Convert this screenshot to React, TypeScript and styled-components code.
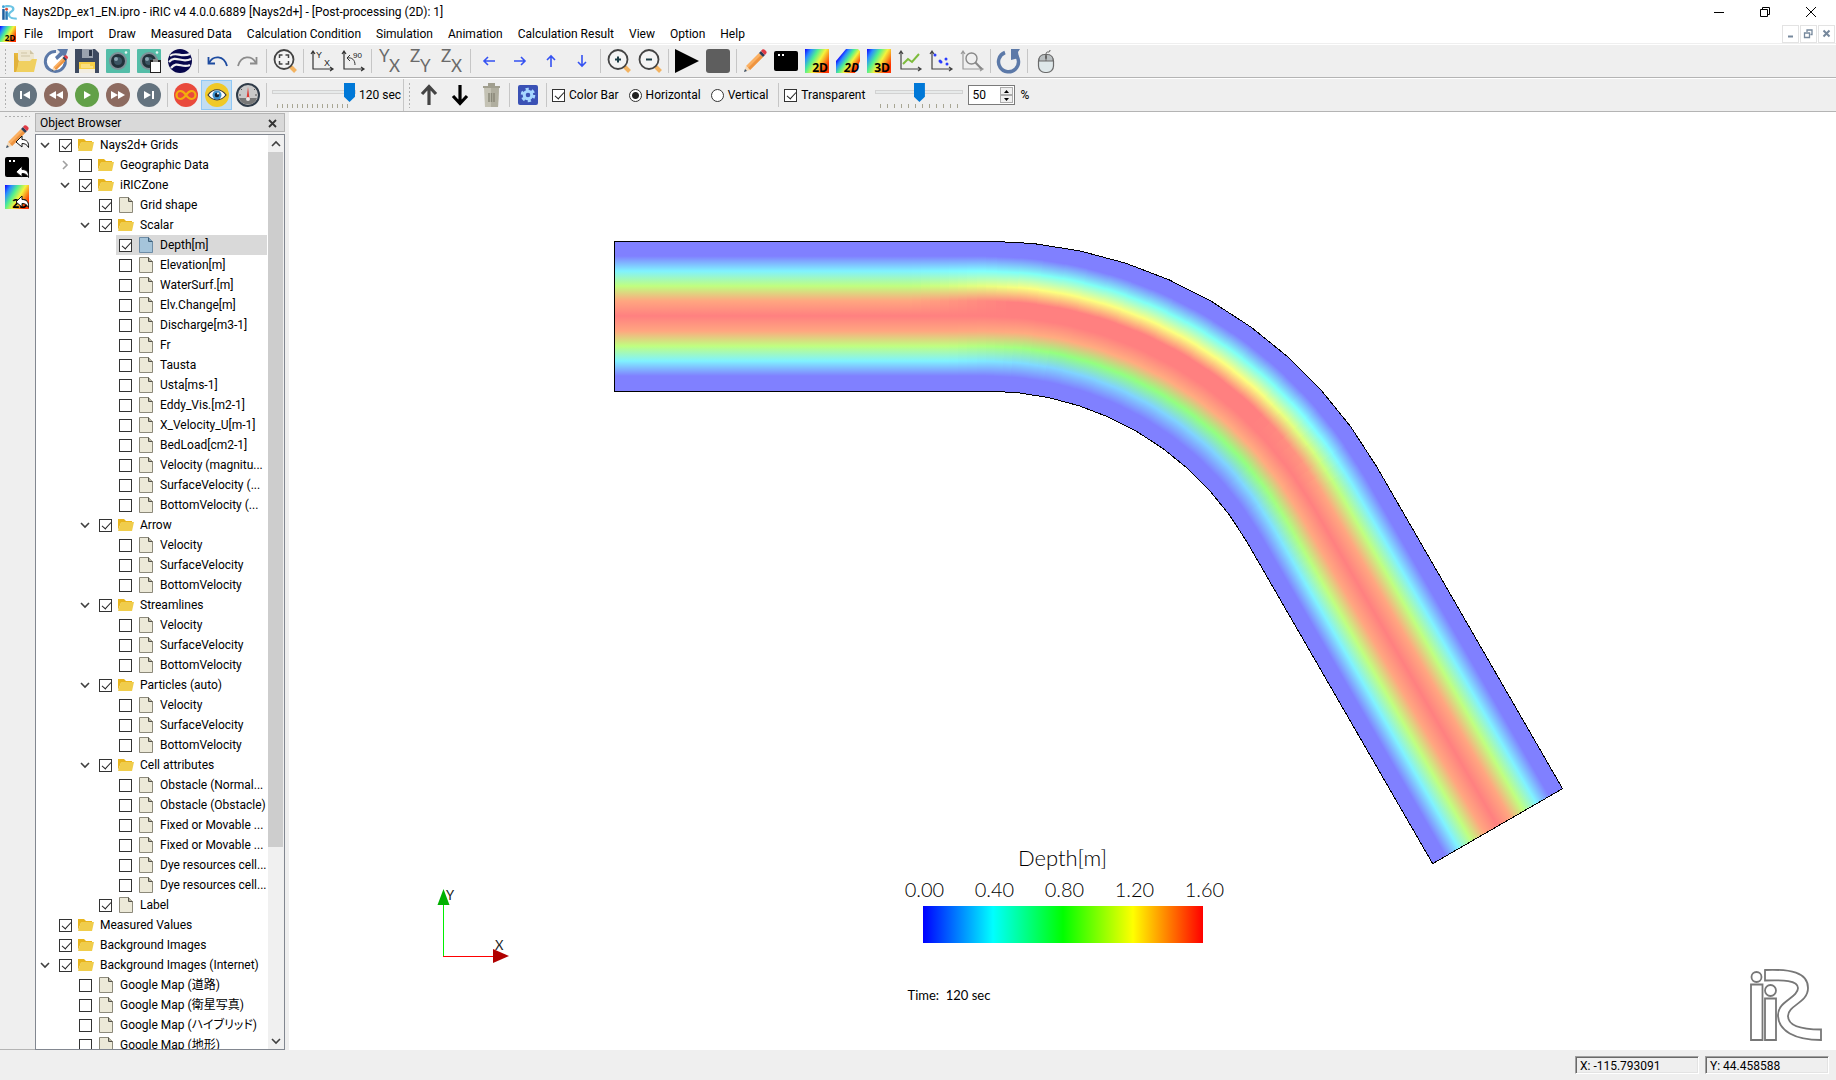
import React, { useState } from "react";
import styled, { createGlobalStyle } from "styled-components";

const UI = `Roboto, "Noto Sans CJK JP", sans-serif`;
const STROKE = `Lato, "Noto Sans CJK JP", sans-serif`;

const Global = createGlobalStyle`
  * { box-sizing: border-box; }
  body { margin: 0; background: #fff; color: #000; font: 12px/16px ${UI}; }
  button { font: inherit; color: inherit; border: 0; background: none; padding: 0; margin: 0; }
  svg { display: block; overflow: visible; }
`;

const Window = styled.div`
  height: 100vh;
  display: flex;
  flex-direction: column;
  overflow: hidden;
`;

/* ---------- title and menu ---------- */

const TitleBar = styled.header`
  height: 24px;
  flex: none;
  display: flex;
  align-items: center;
  padding: 0 2px;
`;
const Title = styled.h1`
  flex: 1;
  margin: 0 0 0 6px;
  font-size: 12px;
  font-weight: 400;
  white-space: nowrap;
`;
const WindowButton = styled.button`
  width: 46px;
  height: 20px;
  display: grid;
  place-items: center;
`;
const MenuBar = styled.nav`
  height: 20px;
  flex: none;
  display: flex;
  align-items: center;
  gap: 1px;
  border-bottom: 1px solid #efefef;
`;
const MenuItem = styled.button`
  height: 19px;
  padding: 0 7px;
  white-space: nowrap;
`;
const MdiButtons = styled.div`
  margin-left: auto;
  display: flex;
  gap: 1px;
  padding-right: 1px;
`;
const MdiButton = styled.button`
  width: 17px;
  height: 18px;
  border: 1px solid #e3e3e3;
  display: grid;
  place-items: center;
`;

/* ---------- tool bars ---------- */

const ToolRow = styled.div`
  height: 34px;
  flex: none;
  display: flex;
  align-items: center;
  background: #efefef;
  border-top: 1px solid #fff;
  border-bottom: 1px solid #b4b4b4;
`;
const Grip = styled.div<{ $across?: boolean }>`
  flex: none;
  width: ${(p) => (p.$across ? "26px" : "3px")};
  height: ${(p) => (p.$across ? "3px" : "26px")};
  margin: ${(p) => (p.$across ? "0 0 4px" : "0 2px 0 4px")};
  background: radial-gradient(circle, #b0b0b0 1px, transparent 1px) 0 0 / ${(p) => (p.$across ? "4px 3px" : "3px 4px")};
`;
const ToolButton = styled.button<{ $active?: boolean }>`
  flex: none;
  width: 31px;
  height: 30px;
  display: grid;
  place-items: center;
  border: 1px solid ${(p) => (p.$active ? "#90c8f6" : "transparent")};
  background: ${(p) => (p.$active ? "#c2ddf2" : "none")};
`;
const Divider = styled.div<{ $full?: boolean }>`
  flex: none;
  width: ${(p) => (p.$full ? "1px" : "6px")};
  height: ${(p) => (p.$full ? "32px" : "24px")};
  background: linear-gradient(#c6c6c6, #c6c6c6) center / 1px 100% no-repeat;
`;
const SliderBox = styled.div<{ $width: number; $step: number }>`
  flex: none;
  width: ${(p) => p.$width}px;
  height: 26px;
  margin-left: 3px;
  padding-bottom: 6px;
  background: repeating-linear-gradient(90deg, #a8a694 0 1px, transparent 1px ${(p) => p.$step}px) 5px 100% / calc(100% - 10px) 4px no-repeat;
`;
const Slider = styled.input`
  appearance: none;
  display: block;
  width: 100%;
  height: 20px;
  margin: 0;
  background: none;
  &::-webkit-slider-runnable-track {
    height: 4px;
    background: #e7eaea;
    border: 1px solid #d2d2d2;
  }
  &::-webkit-slider-thumb {
    appearance: none;
    width: 11px;
    height: 19px;
    margin-top: -8px;
    background: #0078d7;
    clip-path: polygon(0 0, 100% 0, 100% 72%, 50% 100%, 0 72%);
  }
`;
const SliderText = styled.span`
  margin: 0 2px 0 3px;
  white-space: nowrap;
`;
const Option = styled.label`
  display: flex;
  align-items: center;
  gap: 4px;
  margin: 0 7px 0 3px;
  white-space: nowrap;
`;
const Check = styled.input`
  appearance: none;
  flex: none;
  position: relative;
  width: 13px;
  height: 13px;
  margin: 0;
  border: 1px solid #333;
  background: #fff;
  &:checked::after {
    content: "";
    position: absolute;
    left: 4px;
    top: 0;
    width: 4px;
    height: 8px;
    border: solid #222;
    border-width: 0 1px 1px 0;
    transform: rotate(42deg);
  }
`;
const Radio = styled.input`
  appearance: none;
  flex: none;
  width: 13px;
  height: 13px;
  margin: 0;
  border: 1px solid #333;
  border-radius: 50%;
  background: #fff;
  &:checked {
    background: radial-gradient(circle, #222 3px, #fff 4px);
  }
`;
const SpinBox = styled.div`
  display: flex;
  width: 47px;
  height: 20px;
  margin: 0 5px;
  padding: 1px;
  border: 1px solid #7a7a7a;
  background: #fff;
`;
const SpinInput = styled.input`
  appearance: textfield;
  flex: 1;
  min-width: 0;
  border: 0;
  padding: 0 2px;
  font: 12px/16px ${UI};
  &::-webkit-inner-spin-button { appearance: none; }
`;
const SpinButtons = styled.div`
  width: 13px;
  display: grid;
  grid-template-rows: 1fr 1fr;
`;
const SpinButton = styled.button`
  display: grid;
  place-items: center;
  background: #f0f0f0;
  border: 1px solid #adadad;
`;

/* ---------- work area ---------- */

const Work = styled.main`
  flex: 1;
  min-height: 0;
  display: flex;
  background: #efefef;
`;
const SideTools = styled.aside`
  width: 35px;
  flex: none;
  padding: 3px 2px 0 0;
  display: flex;
  flex-direction: column;
  align-items: center;
  border-bottom: 1px solid #b4b4b4;
`;
const SideButton = styled.button`
  width: 31px;
  height: 30px;
  display: grid;
  place-items: center;
`;
const Dock = styled.section`
  width: 250px;
  flex: none;
  margin-right: 4px;
  padding-top: 1px;
  display: flex;
  flex-direction: column;
  gap: 2px;
`;
const DockTitle = styled.div`
  height: 19px;
  flex: none;
  display: flex;
  align-items: center;
  justify-content: space-between;
  padding: 1px 5px 0 4px;
  background: #d9d9d9;
  border: 1px solid #b4b4b4;
`;
const DockName = styled.h2`
  margin: 0;
  font-size: 12px;
  font-weight: 400;
`;
const DockClose = styled.button`
  width: 13px;
  height: 13px;
  display: grid;
  place-items: center;
`;
const TreeFrame = styled.div`
  flex: 1;
  min-height: 0;
  display: flex;
  border: 1px solid #828790;
  background: #fff;
`;
const Tree = styled.ul`
  flex: 1;
  min-width: 0;
  margin: 0;
  padding: 0 1px 0 0;
  list-style: none;
  overflow: hidden;
`;
const Row = styled.li<{ $level: number }>`
  height: 20px;
  display: flex;
  align-items: center;
  padding-left: ${(p) => p.$level * 20}px;
`;
const Expander = styled.button`
  flex: none;
  width: 20px;
  height: 20px;
  padding-right: 2px;
  display: grid;
  place-items: center;
`;
const RowLabel = styled.label<{ $selected?: boolean }>`
  flex: 1;
  min-width: 0;
  height: 20px;
  display: flex;
  align-items: center;
  padding-left: 3px;
  white-space: nowrap;
  font-feature-settings: "palt";
  background: ${(p) => (p.$selected ? "#d9d9d9" : "none")};
`;
const RowIcon = styled.span`
  flex: none;
  width: 16px;
  margin: 0 6px;
`;
const Scroll = styled.div`
  width: 16px;
  flex: none;
  display: flex;
  flex-direction: column;
  background: #f0f0f0;
`;
const ScrollButton = styled.button`
  height: 17px;
  flex: none;
  display: grid;
  place-items: center;
`;
const ScrollTrack = styled.div`
  flex: 1;
  min-height: 0;
`;
const ScrollThumb = styled.div`
  height: 79%;
  margin-right: 1px;
  background: #cdcdcd;
`;

/* ---------- viewer ---------- */

const Viewer = styled.section`
  flex: 1;
  min-width: 0;
  position: relative;
  overflow: hidden;
  background: #fff;
`;
const Scene = styled.svg`
  width: 100%;
  height: 100%;
`;
const AxisLayer = styled.div`
  position: absolute;
  left: 144px;
  bottom: 82px;
`;
const LogoLayer = styled.div`
  position: absolute;
  right: 14px;
  bottom: 9px;
`;
const Legend = styled.div`
  position: absolute;
  left: 50%;
  bottom: 47px;
  width: 310px;
  margin-left: -155px;
  font-family: ${STROKE};
`;
const LegendTitle = styled.div`
  text-align: center;
  font-size: 22px;
  line-height: 24px;
  font-weight: 300;
`;
const LegendScale = styled.div`
  display: flex;
  justify-content: space-between;
  margin: 7px -22px 0 -18px;
  font-size: 20px;
  line-height: 24px;
  font-weight: 300;
  & > span { width: 70px; text-align: center; }
`;
const LegendBar = styled.div`
  height: 37px;
  margin: 5px 15px 0;
  background: linear-gradient(90deg, #00f, #0ff, #0f0, #ff0, #f00);
`;
const TimeText = styled.div`
  margin-top: 44px;
  font-size: 13px;
  line-height: 16px;
  white-space: pre;
`;

/* ---------- status bar ---------- */

const StatusBar = styled.footer`
  height: 30px;
  flex: none;
  display: flex;
  justify-content: flex-end;
  align-items: center;
  gap: 6px;
  padding-right: 7px;
  background: #efefef;
`;
const StatusCell = styled.output`
  width: 124px;
  height: 18px;
  padding-left: 4px;
  line-height: 18px;
  border: 1px solid;
  border-color: #a0a0a0 #fff #fff #a0a0a0;
  box-shadow: inset 1px 1px 0 #696969, inset -1px -1px 0 #e3e3e3;
`;

/* ---------- icons ---------- */

const Svg = ({ size = 24, box = 24, children }: { size?: number; box?: number; children: React.ReactNode }) => (
  <svg width={size} height={size} viewBox={`0 0 ${box} ${box}`} fill="none" aria-hidden="true">
    {children}
  </svg>
);

const AppIcon = () => (
  <Svg size={15} box={72}>
    <circle cx="7" cy="8" r="7" fill="#3aa0d8" />
    <path d="M1 19h12v52H1z" fill="#1f5f9e" />
    <circle cx="22" cy="20" r="7" fill="#e0503c" />
    <path d="M16 30h12v41H16z" fill="#2a7cb8" />
    <path d="M15 1C40-1 60 4 60 19S39 36 39 47s12 13 32 14v10C45 71 28 62 28 46s20-17 20-27-15-8-33-7z" fill="#6cc4e4" />
  </Svg>
);

const OpenIcon = () => (
  <Svg>
    <path d="M1 4h7l2 3v14L1 23z" fill="#e8b93e" />
    <path d="M5 1h12l4 4v14H5z" fill="#ede6d0" />
    <path d="M17 1v4h4z" fill="#cfc5a6" />
    <path d="M8 4h6M8 7h9" stroke="#cfc5a6" />
    <path d="M6 12h11l2-2h5l-3 13H3z" fill="#f0d060" />
    <path d="M1 4v19h2l3-11z" fill="#e2b23a" />
  </Svg>
);

const Pencil = ({ scale = 1, x = 0, y = 0 }: { scale?: number; x?: number; y?: number }) => (
  <g transform={`translate(${x} ${y}) scale(${scale})`}>
    <path d="M3 17L16 4l4 4L7 21z" fill="#fbb062" />
    <path d="M5 19L18 6l2 2L7 21z" fill="#ee9440" />
    <path d="M16 4l2-2 4 4-2 2z" fill="#2f3d56" />
    <path d="M18 2c1-2 3-2 4-1l1 1c1 1 1 2-1 4z" fill="#e03a44" />
    <path d="M3 17l-2 6 6-2z" fill="#f3d9b8" />
    <path d="M1 23l1-3 2 2z" fill="#38506c" />
  </g>
);

const ReloadEditIcon = () => (
  <Svg>
    <circle cx="11" cy="13" r="9" fill="#fff" />
    <path d="M12 2.500A10 10 0 1 0 21 10" stroke="#5c79a8" strokeWidth="3" />
    <path d="M13 0h11l-3 9-2-3-6 5-2-3 5-5z" fill="#5c79a8" />
    <Pencil scale={0.72} x={7} y={6} />
  </Svg>
);
const ReloadIcon = () => (
  <Svg>
    <path d="M8 3.500A10 10 0 1 0 17 4.500" stroke="#5c79a8" strokeWidth="3.500" />
    <path d="M14 0h9l-2 3 1 6-8 2z" fill="#5c79a8" />
  </Svg>
);
const SaveIcon = () => (
  <Svg>
    <path d="M0 0h20l4 4v20H0z" fill="#3e4a60" />
    <path d="M7 0h11v9H7z" fill="#9aa2ae" />
    <path d="M14 1h3v6h-3z" fill="#2c3648" />
    <path d="M4 13h16v9H4z" fill="#f7cf46" />
    <path d="M6 16h9M6 18h12" stroke="#fff0b8" />
    <path d="M4 20h16v4H4z" fill="#f2ede0" />
  </Svg>
);
const CameraIcon = ({ paper }: { paper?: boolean }) => (
  <Svg>
    <rect width="24" height="24" rx="1" fill="#54bda8" />
    <circle cx="20" cy="3.500" r="1.300" fill="#e8f5f2" />
    <circle cx="12" cy="12" r="9" fill="#7e9098" />
    <circle cx="12" cy="12" r="7" fill="#22313a" />
    <circle cx="12" cy="12" r="4" fill="#3c5564" />
    <circle cx="10" cy="10" r="2" fill="#8aa4b0" />
    {paper && (
      <>
        <path d="M13 11h11v13H13z" fill="#222" />
        <path d="M14 13h9v10h-9z" fill="#fff" />
        <path d="M16 10h5v3h-5z" fill="#888" />
      </>
    )}
  </Svg>
);
const EarthIcon = () => (
  <Svg>
    <circle cx="12" cy="12" r="12" fill="#07074c" />
    <path d="M2 7c6-5 11 2 20-2M1 13c7-8 12 2 22-3M3 19c6-8 11 1 19-3" stroke="#efefef" strokeWidth="2.200" />
  </Svg>
);
const UndoIcon = ({ redo }: { redo?: boolean }) => (
  <Svg>
    <g transform={redo ? "matrix(-1 0 0 1 24 0)" : undefined} stroke={redo ? "#8c8c8c" : "#1d4ba0"}>
      <path d="M4 14C8 6 19 6 22 17" strokeWidth="1.800" />
      <path d="M3.500 8v6.500H10" strokeWidth="1.800" />
    </g>
  </Svg>
);
const Magnifier = ({ children }: { children?: React.ReactNode }) => (
  <Svg>
    <path d="M17 17l5.500 5.500" stroke="#f3b361" strokeWidth="4" />
    <circle cx="11" cy="10.500" r="9.500" fill="#f4f4f4" stroke="#444" strokeWidth="1.800" />
    {children}
  </Svg>
);
const AxesIcon = ({ turn }: { turn?: boolean }) => (
  <Svg>
    <path d="M3 3v17h20M1 5l2-3 2 3M20 18l3 2-3 2" stroke="#333" strokeWidth="1.200" />
    {turn ? (
      <>
        <path d="M6 9c5-1 8 2 8 7M9 6L6 9l3 3" stroke="#333" />
        <text x="12" y="9" fontSize="8" fontFamily="Liberation Sans, sans-serif" fill="#222">90</text>
      </>
    ) : (
      <>
        <text x="6" y="9" fontSize="9" fontFamily="Liberation Sans, sans-serif" fill="#222">Y</text>
        <text x="14" y="17" fontSize="9" fontFamily="Liberation Sans, sans-serif" fill="#222">X</text>
      </>
    )}
  </Svg>
);
const PlaneIcon = ({ a, b }: { a: string; b: string }) => (
  <Svg>
    <text x="1" y="13" fontSize="17" fontFamily="Lato, sans-serif" fill="#6a6a6a">{a}</text>
    <text x="11" y="23" fontSize="17" fontFamily="Lato, sans-serif" fill="#6a6a6a">{b}</text>
  </Svg>
);
const ArrowIcon = ({ angle }: { angle: number }) => (
  <Svg>
    <g transform={`rotate(${angle} 12 12)`}>
      <path d="M7 12h11M11 8l-4 4 4 4" stroke="#3552f2" strokeWidth="1.600" />
    </g>
  </Svg>
);
const PlayIcon = () => (
  <Svg>
    <path d="M0 0l24 12L0 24z" fill="#000" />
  </Svg>
);
const StopIcon = () => (
  <Svg>
    <rect width="24" height="24" rx="3" fill="#5e5e5e" />
  </Svg>
);
const BackArrow = () => (
  <path d="M11 17l6-6v3.500c5 0 7 3 6.500 8-1.500-3-3.500-4-6.500-4V22z" fill="#fff" stroke="#111" strokeWidth="1" />
);
const PencilIcon = ({ back }: { back?: boolean }) => (
  <Svg>
    <Pencil />
    {back && <BackArrow />}
  </Svg>
);
const ConsoleIcon = ({ back }: { back?: boolean }) => (
  <Svg>
    <rect y="2" width="24" height="20" rx="2" fill="#000" />
    <path d="M4 5h2v2H4zM8 5h2v2H8z" fill="#fff" />
    {back && <BackArrow />}
  </Svg>
);
const Rainbow = ({ id, skew }: { id: string; skew?: boolean }) => (
  <linearGradient id={id} x1={skew ? "0.200" : "0"} y1={skew ? "0.200" : "0"} x2={skew ? "0.900" : "1"} y2={skew ? "0.700" : "0.600"}>
    <stop offset="0" stopColor="#10f" />
    <stop offset="0.200" stopColor="#2a8cff" />
    <stop offset="0.420" stopColor="#50f090" />
    <stop offset="0.650" stopColor="#f4f43c" />
    <stop offset="1" stopColor="#f30" />
  </linearGradient>
);
const MapIcon = ({ id, text, size = 24, skew, back }: { id: string; text: string; size?: number; skew?: boolean; back?: boolean }) => (
  <Svg size={size}>
    <defs><Rainbow id={id} skew={skew} /></defs>
    <path d={skew ? "M10 0h12l2 2v10l-5 12H0V12z" : "M0 0h24v24H0z"} fill={`url(#${id})`} />
    <text x="23" y="23" textAnchor="end" fontSize="12" fontWeight="700" fontStyle={skew ? "italic" : "normal"} fontFamily="Open Sans, sans-serif" fill="#000">{text}</text>
    {back && <BackArrow />}
  </Svg>
);
const GraphIcon = ({ kind }: { kind: "line" | "dots" | "zoom" }) => (
  <Svg>
    <path d="M3 3v17h20M1 5l2-3 2 3M20 18l3 2-3 2" stroke={kind === "zoom" ? "#999" : "#444"} strokeWidth="1.200" />
    {kind === "line" && <path d="M5 15l5-5 4 3 7-8" stroke="#7dbb3c" strokeWidth="2" />}
    {kind === "dots" && [[6, 6], [11, 12], [17, 10], [18, 15], [12, 13]].map(([x, y], i) => <circle key={i} cx={x} cy={y} r="1.500" fill="#2a3cff" />)}
    {kind === "zoom" && (
      <>
        <circle cx="11.500" cy="9.500" r="5.500" stroke="#888" strokeWidth="1.400" />
        <path d="M15.500 13.500l6 6.500" stroke="#888" strokeWidth="2" />
      </>
    )}
  </Svg>
);
const MouseIcon = () => (
  <Svg>
    <path d="M12 6c0-3 1-3 2-3s2 0 2-2" stroke="#555" />
    <rect x="4.500" y="5.500" width="15" height="18" rx="6.500" fill="#dfe8ea" stroke="#6a6a6a" strokeWidth="1.200" />
    <path d="M5 12V11c0-3 2-5.500 6-5.500h2c4 0 6 2.500 6 5.500v1z" fill="#b9bec0" stroke="#6a6a6a" />
    <path d="M12 6v6" stroke="#6a6a6a" />
    <rect x="11" y="6" width="2" height="4" rx="1" fill="#666" />
  </Svg>
);
const Disc = ({ color, d }: { color: string; d: string }) => (
  <Svg>
    <circle cx="12" cy="12" r="12" fill={color} />
    <path d={d} fill="#fff" />
  </Svg>
);
const LoopIcon = () => (
  <Svg>
    <circle cx="12" cy="12" r="12" fill="#e94a3c" />
    <path d="M12 12c-2-3-3.500-4-5.500-4a4 4 0 0 0 0 8c2 0 3.500-1 5.500-4s3.500-4 5.500-4a4 4 0 0 1 0 8c-2 0-3.500-1-5.500-4z" stroke="#f4ae0c" strokeWidth="2.200" />
  </Svg>
);
const EyeIcon = () => (
  <Svg>
    <circle cx="12" cy="12" r="12" fill="#f0c928" />
    <path d="M3 12c5-7 13-7 18 0-5 6.500-13 6.500-18 0z" fill="#fff" stroke="#3a3a3a" strokeWidth="1.200" />
    <circle cx="12" cy="12" r="4.500" fill="#3b8fcc" />
    <circle cx="12" cy="12" r="2.300" fill="#123" />
    <circle cx="13" cy="10.500" r="1" fill="#fff" />
  </Svg>
);
const GaugeIcon = () => (
  <Svg>
    <circle cx="12" cy="12" r="11" fill="#c9c9c9" stroke="#2f3b48" strokeWidth="2" />
    <path d="M3 15a9.500 9.500 0 0 0 18 0z" fill="#777" />
    <path d="M5 12H3m3-5L5 6m13 1l1-1m0 6h2" stroke="#555" />
    <path d="M12 4l1.500 12h-3z" fill="#e03a34" />
    <circle cx="12" cy="16" r="2" fill="#e8e8e8" />
  </Svg>
);
const MoveIcon = ({ down }: { down?: boolean }) => (
  <Svg>
    <g transform={down ? "rotate(180 12 12)" : undefined} stroke={down ? "#000" : "#444"} strokeWidth="3.200">
      <path d="M12 22V4M5 11l7-7.500 7 7.500" />
    </g>
  </Svg>
);
const TrashIcon = () => (
  <Svg>
    <path d="M5 5h15l-1 19H6z" fill="#c4c2b4" />
    <path d="M12 5h8l-1 19h-7z" fill="#b0ae9f" />
    <path d="M4 3h17v2H4zM9 0h7v3H9z" fill="#a19f8f" />
    <path d="M10 10v9M12.500 10v9M15 10v9" stroke="#8a887a" strokeWidth="1.500" />
  </Svg>
);
const GearIcon = () => (
  <Svg>
    <rect x="2" y="2" width="20" height="20" rx="2" fill="#3a51b5" />
    <circle cx="12" cy="12" r="5.800" stroke="#a6d6ff" strokeWidth="3" strokeDasharray="3.040" />
    <circle cx="12" cy="12" r="3.800" stroke="#a6d6ff" strokeWidth="3" />
  </Svg>
);
const FolderIcon = () => (
  <svg width="16" height="14" viewBox="0 0 16 14" aria-hidden="true">
    <path d="M0 1h6l2 2h6v2H3L0 12z" fill="#e8b51c" />
    <path d="M3 4h13l-2 9H0z" fill="#f0cd4c" />
  </svg>
);
const FileIcon = ({ selected }: { selected?: boolean }) => (
  <svg width="16" height="18" viewBox="0 0 16 18" aria-hidden="true">
    <path d="M1.500 1.500h9l4 4v11h-13z" fill={selected ? "#a5c4da" : "#ece9d8"} stroke={selected ? "#6d8ca6" : "#8c897a"} />
    <path d="M10.500 1.500v4h4" fill={selected ? "#7fa3bd" : "#b9b6a4"} stroke={selected ? "#3f5f78" : "#55534a"} />
  </svg>
);
const Chevron = ({ dir, light }: { dir: "down" | "right" | "up"; light?: boolean }) => {
  const d = { down: "M1 3l4 4 4-4", up: "M1 7l4-4 4 4", right: "M3 1l4 4-4 4" }[dir];
  return (
    <Svg size={10} box={10}>
      <path d={d} stroke={light ? "#a0a0a0" : "#404040"} strokeWidth="1.600" />
    </Svg>
  );
};

/* ---------- depth contour ---------- */

const RAMP = [[128, 128, 255], [128, 255, 255], [128, 255, 128], [255, 255, 128], [255, 128, 128]];
const depthColor = (depth: number) => {
  const t = Math.max(0, Math.min(depth / 0.4, 4));
  const i = Math.min(3, Math.floor(t));
  const mix = RAMP[i].map((c, k) => Math.round(c + (RAMP[i + 1][k] - c) * (t - i)));
  return `rgb(${mix.join(",")})`;
};

const STRAIGHT = [0, 0, 0.36, 1.0, 1.48, 1.6, 1.48, 1.0, 0.36, 0, 0];
const BEND = [0, 0, 0.43, 1.19, 1.62, 1.68, 1.46, 0.86, 0.26, 0, 0];

const WIDTH = 150;
const REACH = 372;
const OUTER = 451;
const START = { x: 325, y: 129 };
const CELLS = 10;
const SUB = 4;

const ramp = (s: number, a: number, b: number, c: number, d: number) =>
  Math.max(0, Math.min(1, (s - a) / (b - a), (d - s) / (d - c)));

// Point on a cross-section; u counts cells downstream (0 to 30), n is the distance from the outer bank.
const node = (u: number, n: number) => {
  const cx = START.x + REACH;
  const cy = START.y + OUTER;
  if (u <= CELLS) return { x: START.x + (REACH * u) / CELLS, y: START.y + n };
  const angle = ((Math.min(u, 2 * CELLS) - CELLS) / CELLS) * (Math.PI / 3);
  const past = (Math.max(0, u - 2 * CELLS) / CELLS) * REACH;
  const r = OUTER - n;
  return {
    x: cx + r * Math.sin(angle) + past * 0.5,
    y: cy - r * Math.cos(angle) + past * Math.sin(Math.PI / 3),
  };
};
const along = (u: number, n: number) => {
  const i = Math.min(3 * CELLS - 1, Math.floor(u));
  const a = node(i, n);
  const b = node(i + 1, n);
  const t = u - i;
  return { x: a.x + (b.x - a.x) * t, y: a.y + (b.y - a.y) * t };
};
const pt = (p: { x: number; y: number }) => `${p.x.toFixed(2)},${p.y.toFixed(2)}`;

const Channel = () => {
  const strips = Array.from({ length: 3 * CELLS * SUB }, (_, i) => {
    const u = i / SUB;
    const end = Math.min(3 * CELLS, u + 1.3 / SUB);
    const mid = u + 0.5 / SUB;
    const outerBlend = ramp(mid, 8, 11, 17, 20);
    const innerBlend = ramp(mid, 9, 12, 18, 22);
    const colors = STRAIGHT.map((d, k) => {
      const blend = k < 5 ? outerBlend : innerBlend;
      return depthColor(d + (BEND[k] - d) * blend);
    });
    return { id: `strip${i}`, a: along(mid, 0), b: along(mid, WIDTH), colors, points: [along(u, 0), along(end, 0), along(end, WIDTH), along(u, WIDTH)].map(pt).join(" ") };
  });
  const cells = Array.from({ length: 3 * CELLS + 1 }, (_, i) => i);
  const outline = [...cells.map((i) => node(i, 0)), ...cells.slice().reverse().map((i) => node(i, WIDTH))].map(pt).join(" ");
  return (
    <Scene viewBox="0 0 1547 938" role="img" aria-label="Depth contour">
      <defs>
        {strips.map((s) => (
          <linearGradient key={s.id} id={s.id} gradientUnits="userSpaceOnUse" x1={s.a.x} y1={s.a.y} x2={s.b.x} y2={s.b.y}>
            {s.colors.map((c, k) => <stop key={k} offset={k / 10} stopColor={c} />)}
          </linearGradient>
        ))}
      </defs>
      <g shapeRendering="crispEdges">
        {strips.map((s) => <polygon key={s.id} points={s.points} fill={`url(#${s.id})`} />)}
        <polygon points={outline} fill="none" stroke="#000" />
      </g>
    </Scene>
  );
};

const Axes = () => (
  <svg width="84" height="84" viewBox="0 0 84 84" aria-label="Axes">
    <path d="M10 20h1v52h-1z" fill="#00f000" />
    <path d="M10 72h54v1H10z" fill="#f00" />
    <path d="M10.500 5l6 16h-12z" fill="#00b000" />
    <path d="M60 65l16 7-16 7z" fill="#b00000" />
    <text x="13" y="16" fontSize="13" fontFamily="Lato, sans-serif" fill="#222">Y</text>
    <text x="62" y="66" fontSize="13" fontFamily="Lato, sans-serif" fill="#222">X</text>
  </svg>
);

const Logo = () => (
  <svg width="72" height="72" viewBox="0 0 72 72" fill="none" stroke="#777" strokeWidth="1.800" aria-label="iRIC">
    <circle cx="6.500" cy="8" r="5" />
    <path d="M1 15.500h11.500V71H1z" />
    <circle cx="20.500" cy="21.500" r="5.500" />
    <path d="M15 29.500h11V71H15z" />
    <path d="M15 1C40 0 58 3 58 19C58 34 38 36 38 47C38 56 50 60.500 71 60.500V71C45 71 28 62 28 46C28 32 48 29 48 19C48 11 33 11 15 11.500z" />
  </svg>
);

/* ---------- data ---------- */

type Node = { level: number; text: string; kind?: "folder"; checked?: boolean; open?: boolean; closed?: boolean; selected?: boolean };
const folder = (level: number, text: string, more: Partial<Node> = {}): Node => ({ level, text, kind: "folder", checked: true, open: true, ...more });
const file = (level: number, text: string, more: Partial<Node> = {}): Node => ({ level, text, ...more });
const velocities = ["Velocity", "SurfaceVelocity", "BottomVelocity"].map((t) => file(3, t));

const TREE: Node[] = [
  folder(0, "Nays2d+ Grids"),
  folder(1, "Geographic Data", { checked: false, open: false, closed: true }),
  folder(1, "iRICZone"),
  file(2, "Grid shape", { checked: true }),
  folder(2, "Scalar"),
  file(3, "Depth[m]", { checked: true, selected: true }),
  ...["Elevation[m]", "WaterSurf.[m]", "Elv.Change[m]", "Discharge[m3-1]", "Fr", "Tausta", "Usta[ms-1]", "Eddy_Vis.[m2-1]", "X_Velocity_U[m-1]", "BedLoad[cm2-1]", "Velocity (magnitu...", "SurfaceVelocity (...", "BottomVelocity (..."].map((t) => file(3, t)),
  folder(2, "Arrow"),
  ...velocities,
  folder(2, "Streamlines"),
  ...velocities,
  folder(2, "Particles (auto)"),
  ...velocities,
  folder(2, "Cell attributes"),
  ...["Obstacle (Normal...", "Obstacle (Obstacle)", "Fixed or Movable ...", "Fixed or Movable ...", "Dye resources cell...", "Dye resources cell..."].map((t) => file(3, t)),
  file(2, "Label", { checked: true }),
  folder(0, "Measured Values", { open: false }),
  folder(0, "Background Images", { open: false }),
  folder(0, "Background Images (Internet)"),
  ...["道路", "衛星写真", "ハイブリッド", "地形"].map((t) => file(1, `Google Map (${t})`)),
];

const MENUS = ["File", "Import", "Draw", "Measured Data", "Calculation Condition", "Simulation", "Animation", "Calculation Result", "View", "Option", "Help"];

type Tool = [string, React.ReactNode];
const TOOLS: Tool[][] = [
  [["Open", <OpenIcon />], ["Reload and edit", <ReloadEditIcon />], ["Save", <SaveIcon />], ["Snapshot", <CameraIcon />], ["Copy snapshot", <CameraIcon paper />], ["Google Earth", <EarthIcon />]],
  [["Undo", <UndoIcon />], ["Redo", <UndoIcon redo />]],
  [["Fit", <Magnifier><path d="M6.500 9V6h3M12.500 6h3v3M15.500 12v3h-3M9.500 15h-3v-3" stroke="#444" strokeWidth="1.500" /></Magnifier>]],
  [["Reset rotation", <AxesIcon />], ["Rotate 90", <AxesIcon turn />]],
  [["XY plane", <PlaneIcon a="Y" b="X" />], ["YZ plane", <PlaneIcon a="Z" b="Y" />], ["ZX plane", <PlaneIcon a="Z" b="X" />]],
  [["Left", <ArrowIcon angle={0} />], ["Right", <ArrowIcon angle={180} />], ["Up", <ArrowIcon angle={90} />], ["Down", <ArrowIcon angle={270} />]],
  [["Zoom in", <Magnifier><path d="M8 10.500h6M11 7.500v6" stroke="#1c3c44" strokeWidth="2" /></Magnifier>], ["Zoom out", <Magnifier><path d="M8 10.500h6" stroke="#1c3c44" strokeWidth="2" /></Magnifier>]],
  [["Run", <PlayIcon />], ["Stop", <StopIcon />]],
  [["Pre-processor", <PencilIcon />], ["Console", <ConsoleIcon />], ["2D window", <MapIcon id="tool2d" text="2D" />], ["Bird's-eye 2D window", <MapIcon id="tool2ds" text="2D" skew />], ["3D window", <MapIcon id="tool3d" text="3D" />], ["Graph", <GraphIcon kind="line" />], ["Scatter chart", <GraphIcon kind="dots" />], ["Verification", <GraphIcon kind="zoom" />]],
  [["Refresh", <ReloadIcon />]],
  [["Mouse hint", <MouseIcon />]],
];

const SLATE = "#64737f";
const BROWN = "#8d6b60";
const PLAYERS: Tool[] = [
  ["First", <Disc color={SLATE} d="M7 8h2v8H7zM17 8v8l-7-4z" />],
  ["Back", <Disc color={BROWN} d="M12 8v8l-7-4zM19 8v8l-7-4z" />],
  ["Play", <Disc color="#62a048" d="M9 8l7 4-7 4z" />],
  ["Forward", <Disc color={BROWN} d="M5 8l7 4-7 4zM12 8l7 4-7 4z" />],
  ["Last", <Disc color={SLATE} d="M7 8l7 4-7 4zM15 8h2v8h-2z" />],
];

/* ---------- page ---------- */

const Tools = ({ items }: { items: Tool[] }) => (
  <>
    {items.map(([name, icon]) => (
      <ToolButton key={name} aria-label={name}>{icon}</ToolButton>
    ))}
  </>
);

export default function App() {
  const [opacity, setOpacity] = useState(50);
  const change = (e: React.ChangeEvent<HTMLInputElement>) => setOpacity(Number(e.target.value));

  return (
    <Window>
      <Global />
      <TitleBar>
        <AppIcon />
        <Title>Nays2Dp_ex1_EN.ipro - iRIC v4 4.0.0.6889 [Nays2d+] - [Post-processing (2D): 1]</Title>
        <WindowButton aria-label="Minimize"><Svg size={10} box={10}><path d="M0 5.500h10" stroke="#000" /></Svg></WindowButton>
        <WindowButton aria-label="Restore"><Svg size={10} box={10}><path d="M.5 2.500h7v7h-7zM2.500 2.500v-2h7v7h-2" stroke="#000" /></Svg></WindowButton>
        <WindowButton aria-label="Close"><Svg size={10} box={10}><path d="M0 0l10 10M10 0L0 10" stroke="#000" /></Svg></WindowButton>
      </TitleBar>
      <MenuBar>
        <MapIcon id="mdi2d" text="2D" size={16} />
        {MENUS.map((m) => <MenuItem key={m}>{m}</MenuItem>)}
        <MdiButtons>
          <MdiButton aria-label="Minimize window"><Svg size={9} box={9}><path d="M2 7.500h5" stroke="#76889c" strokeWidth="2" /></Svg></MdiButton>
          <MdiButton aria-label="Restore window"><Svg size={9} box={9}><path d="M.5 4h5v4.500h-5zM3 3V1h5v4.500H6.500" stroke="#76889c" strokeWidth="1.300" /></Svg></MdiButton>
          <MdiButton aria-label="Close window"><Svg size={9} box={9}><path d="M1.500 1.500l6 6M7.500 1.500l-6 6" stroke="#76889c" strokeWidth="2" /></Svg></MdiButton>
        </MdiButtons>
      </MenuBar>

      <ToolRow>
        <Grip />
        {TOOLS.map((group, i) => (
          <React.Fragment key={i}>
            {i > 0 && <Divider />}
            <Tools items={group} />
          </React.Fragment>
        ))}
      </ToolRow>

      <ToolRow>
        <Grip />
        <Tools items={PLAYERS} />
        <Divider />
        <ToolButton aria-label="Loop"><LoopIcon /></ToolButton>
        <ToolButton aria-label="Follow last step" $active><EyeIcon /></ToolButton>
        <ToolButton aria-label="Speed"><GaugeIcon /></ToolButton>
        <Divider />
        <SliderBox $width={84} $step={5}>
          <Slider type="range" aria-label="Time step" min={0} max={15} defaultValue={15} />
        </SliderBox>
        <SliderText>120 sec</SliderText>
        <Divider $full />
        <Grip />
        <ToolButton aria-label="Move up"><MoveIcon /></ToolButton>
        <ToolButton aria-label="Move down"><MoveIcon down /></ToolButton>
        <ToolButton aria-label="Delete"><TrashIcon /></ToolButton>
        <Divider />
        <ToolButton aria-label="Settings"><GearIcon /></ToolButton>
        <Divider />
        <Option><Check type="checkbox" defaultChecked />Color Bar</Option>
        <Option><Radio type="radio" name="direction" defaultChecked />Horizontal</Option>
        <Option><Radio type="radio" name="direction" />Vertical</Option>
        <Divider />
        <Option><Check type="checkbox" defaultChecked />Transparent</Option>
        <SliderBox $width={88} $step={7}>
          <Slider type="range" aria-label="Opacity" min={0} max={100} value={opacity} onChange={change} />
        </SliderBox>
        <SpinBox>
          <SpinInput type="number" aria-label="Opacity percent" value={opacity} onChange={change} />
          <SpinButtons>
            <SpinButton aria-label="Increase" onClick={() => setOpacity((v) => Math.min(100, v + 1))}><svg width="5" height="3" viewBox="0 0 5 3"><path d="M0 3l2.500-3L5 3z" /></svg></SpinButton>
            <SpinButton aria-label="Decrease" onClick={() => setOpacity((v) => Math.max(0, v - 1))}><svg width="5" height="3" viewBox="0 0 5 3"><path d="M0 0l2.500 3L5 0z" /></svg></SpinButton>
          </SpinButtons>
        </SpinBox>
        <span>%</span>
      </ToolRow>

      <Work>
        <SideTools>
          <Grip $across />
          <SideButton aria-label="Focus pre-processor"><PencilIcon back /></SideButton>
          <SideButton aria-label="Focus console"><ConsoleIcon back /></SideButton>
          <SideButton aria-label="Focus 2D window"><MapIcon id="side2d" text="2D" back /></SideButton>
        </SideTools>

        <Dock>
          <DockTitle>
            <DockName>Object Browser</DockName>
            <DockClose aria-label="Close Object Browser"><Svg size={9} box={9}><path d="M1 1l7 7M8 1L1 8" stroke="#333" strokeWidth="1.800" /></Svg></DockClose>
          </DockTitle>
          <TreeFrame>
            <Tree>
              {TREE.map((n, i) => (
                <Row key={i} $level={n.level}>
                  <Expander aria-label={n.open ? `Collapse ${n.text}` : `Expand ${n.text}`}>
                    {n.open && <Chevron dir="down" />}
                    {n.closed && <Chevron dir="right" light />}
                  </Expander>
                  <RowLabel $selected={n.selected}>
                    <Check type="checkbox" defaultChecked={n.checked} />
                    <RowIcon>{n.kind === "folder" ? <FolderIcon /> : <FileIcon selected={n.selected} />}</RowIcon>
                    {n.text}
                  </RowLabel>
                </Row>
              ))}
            </Tree>
            <Scroll>
              <ScrollButton aria-label="Scroll up"><Chevron dir="up" /></ScrollButton>
              <ScrollTrack><ScrollThumb /></ScrollTrack>
              <ScrollButton aria-label="Scroll down"><Chevron dir="down" /></ScrollButton>
            </Scroll>
          </TreeFrame>
        </Dock>

        <Viewer>
          <Channel />
          <AxisLayer><Axes /></AxisLayer>
          <Legend>
            <LegendTitle>Depth[m]</LegendTitle>
            <LegendScale>
              {["0.00", "0.40", "0.80", "1.20", "1.60"].map((v) => <span key={v}>{v}</span>)}
            </LegendScale>
            <LegendBar />
            <TimeText>{"Time:  120 sec"}</TimeText>
          </Legend>
          <LogoLayer><Logo /></LogoLayer>
        </Viewer>
      </Work>

      <StatusBar>
        <StatusCell>X: -115.793091</StatusCell>
        <StatusCell>Y: 44.458588</StatusCell>
      </StatusBar>
    </Window>
  );
}
